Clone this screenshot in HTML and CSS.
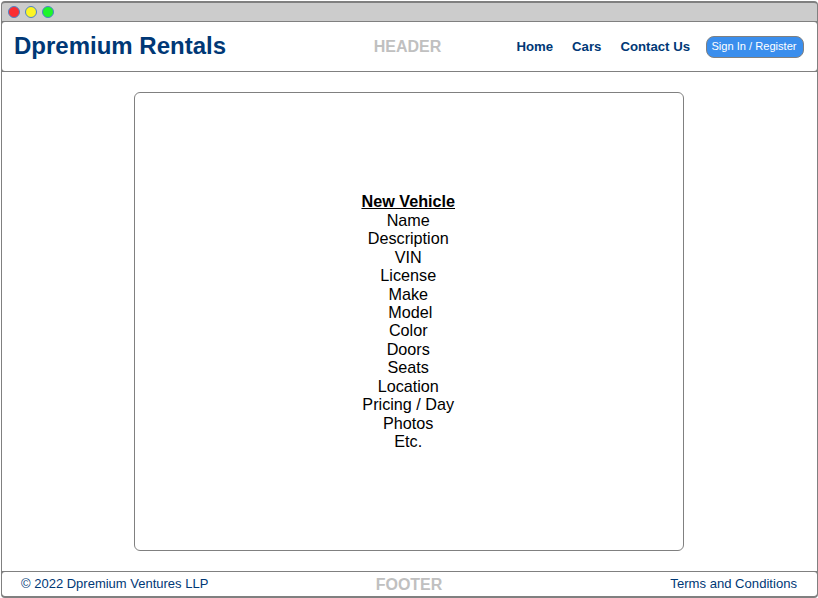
FILE: index.html
```html
<!DOCTYPE html>
<html lang="en">
<head>
<meta charset="utf-8">
<title>Dpremium Rentals</title>
<link rel="stylesheet" href="styles.css">
</head>
<body>
<div class="window">
  <div class="titlebar">
    <span class="dot red"></span><span class="dot yellow"></span><span class="dot green"></span>
  </div>
  <header class="header">
    <h1 class="brand">Dpremium Rentals</h1>
    <span class="section-label">HEADER</span>
    <nav class="nav">
      <a>Home</a><a>Cars</a><a>Contact Us</a>
      <button class="sign-in">Sign In / Register</button>
    </nav>
  </header>
  <main class="main">
    <section class="card">
      <h2 class="card-title">New Vehicle</h2>
      <ul class="fields">
        <li>Name</li>
        <li>Description</li>
        <li>VIN</li>
        <li>License</li>
        <li>Make</li>
        <li class="indented">Model</li>
        <li>Color</li>
        <li>Doors</li>
        <li>Seats</li>
        <li>Location</li>
        <li>Pricing / Day</li>
        <li>Photos</li>
        <li>Etc.</li>
      </ul>
    </section>
  </main>
  <footer class="footer">
    <span class="copyright">© 2022 Dpremium Ventures LLP</span>
    <span class="section-label">FOOTER</span>
    <a class="terms">Terms and Conditions</a>
  </footer>
</div>
</body>
</html>
```
FILE: styles.css
```css
* { box-sizing: border-box; }
body {
  margin: 0;
  background: #fff;
  font-family: "Liberation Sans", Arial, sans-serif;
}
.window {
  width: 817px;
  height: 597px;
  margin: 1px 0 0 1px;
  border: 1px solid #808080;
  border-width: 2px 1px;
  border-radius: 4px;
  overflow: hidden;
  display: flex;
  flex-direction: column;
  background: #808080;
}
.titlebar {
  height: 18px;
  background: #ccc;
  display: flex;
  align-items: center;
  gap: 5px;
  padding-left: 5.5px;
}
.dot {
  width: 12px;
  height: 12px;
  border: 1px solid #4d82c8;
  border-radius: 50%;
}
.red { background: #fa2d32; }
.yellow { background: #fcf524; }
.green { background: #1df52a; }
.header, .footer {
  display: grid;
  align-items: center;
  background: #fff;
  color: #003876;
}
.header {
  height: 49px;
  margin-top: 1px;
  grid-template-columns: 1fr 70px 1fr;
  border-radius: 3px;
  padding: 0 13px 0 12px;
}
.brand {
  margin: 0;
  padding-bottom: 2px;
  font-size: 24px;
  line-height: 28px;
  white-space: nowrap;
}
.section-label {
  color: #c0c0c0;
  font-size: 16px;
  font-weight: bold;
  text-align: center;
}
.header .section-label { margin-left: -3px; }
.nav {
  display: flex;
  align-items: center;
  justify-content: flex-end;
  gap: 19px;
  font-size: 13.2px;
  font-weight: bold;
  white-space: nowrap;
}
.sign-in {
  width: 98px;
  height: 22px;
  margin-left: -3px;
  padding: 0 2px 2px 0;
  border: 1px solid #808080;
  border-radius: 8px;
  background: #3a8eed;
  color: #fff;
  font: 11.1px "Liberation Sans", Arial, sans-serif;
}
.main {
  flex: 1;
  margin-top: 1px;
  padding: 20px 0 0 132px;
  background: #fff;
}
.card {
  width: 550px;
  height: 459px;
  padding: 99.4px 1.5px 0 0;
  border: 1px solid #808080;
  border-radius: 6px;
  color: #000;
  font-size: 16.2px;
  line-height: 18.43px;
  text-align: center;
}
.card-title {
  margin: 0;
  font-size: inherit;
  text-decoration: underline;
}
.fields {
  margin: 0;
  padding: 0;
  list-style: none;
}
.indented { padding-left: 4px; }
.footer {
  height: 24px;
  margin-top: 1px;
  grid-template-columns: 1fr 70px 1fr;
  border-radius: 3px;
  padding: 0 20px 0 19px;
  font-size: 13px;
}
.footer .section-label { padding-top: 1px; }
.copyright, .terms { padding-bottom: 2px; }
.terms {
  font-size: 13.1px;
  text-align: right;
}
```
